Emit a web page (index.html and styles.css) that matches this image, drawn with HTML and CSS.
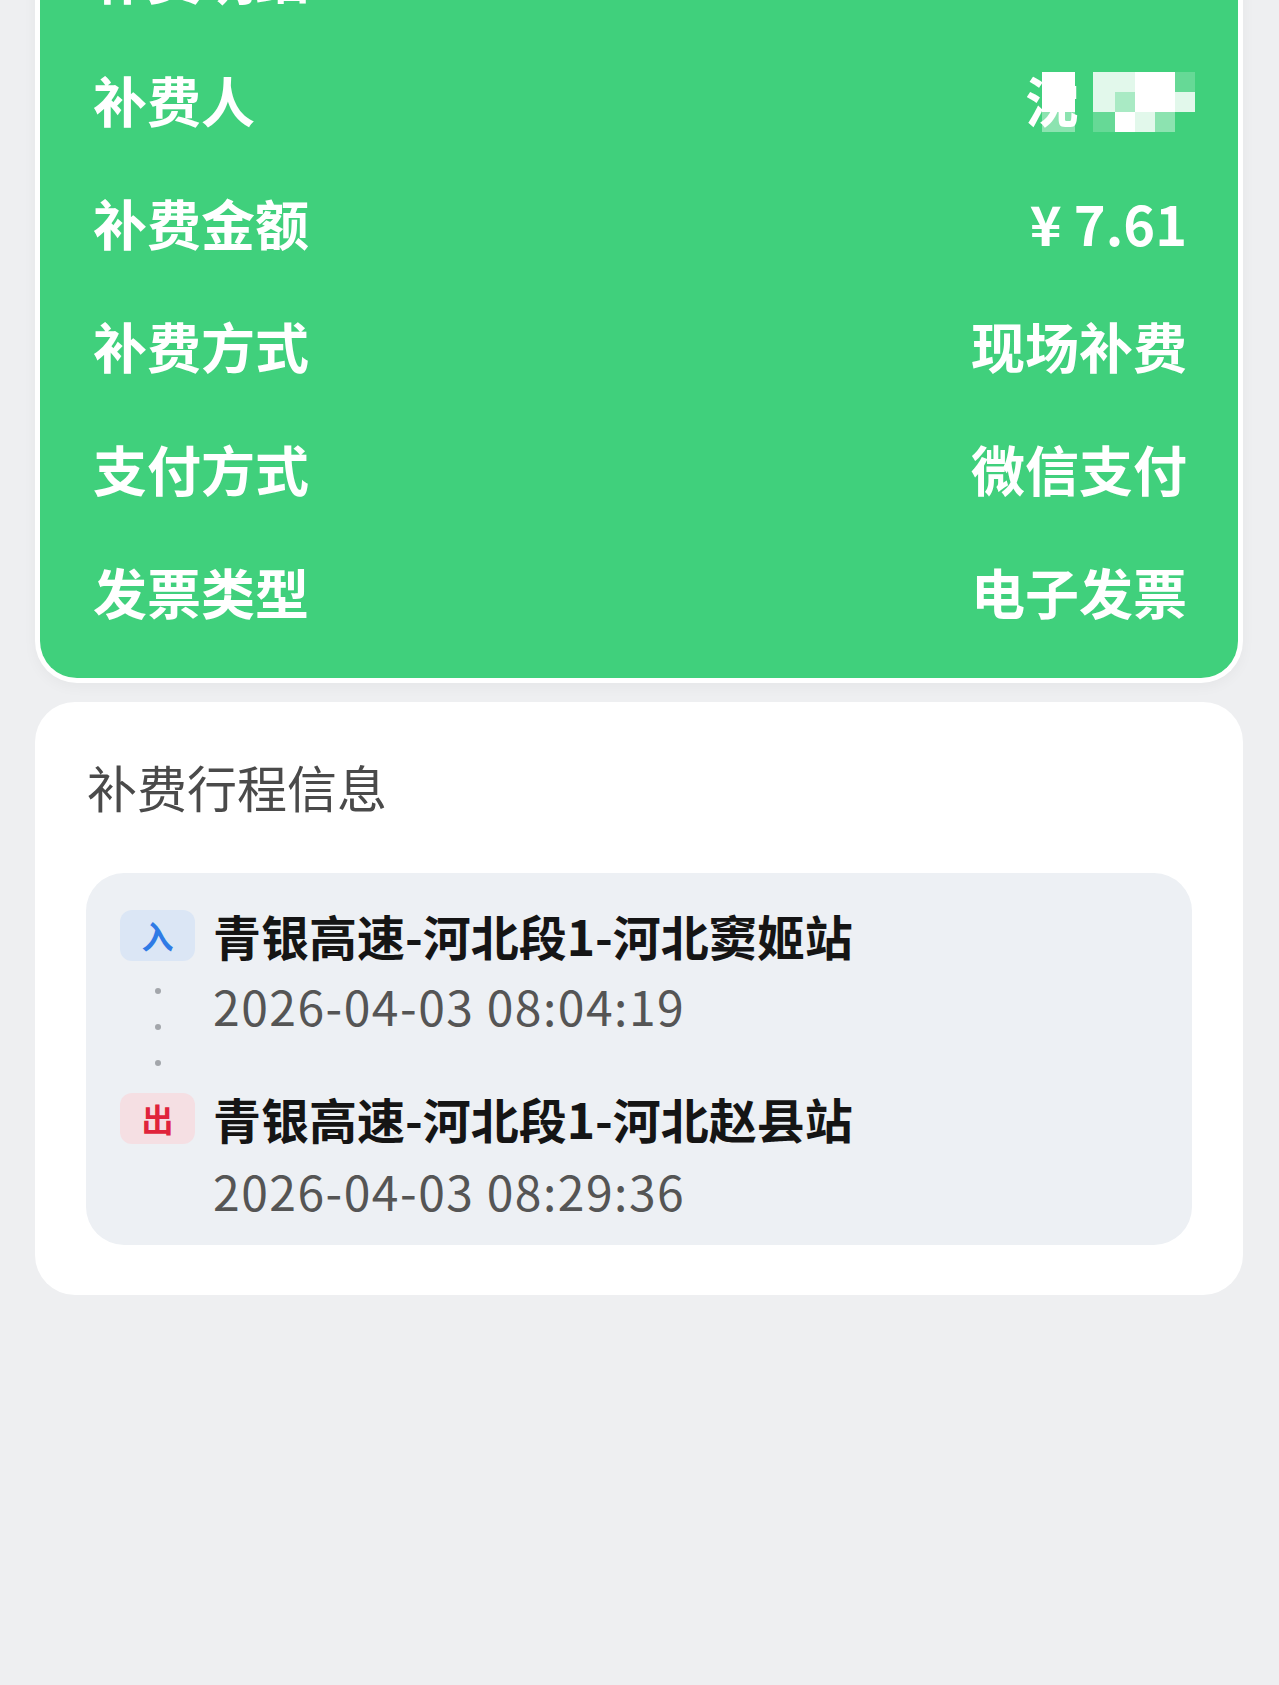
FILE: index.html
```html
<!DOCTYPE html>
<html lang="zh-CN">
<head>
    <meta charset="UTF-8">
    <meta name="viewport" content="width=device-width, initial-scale=1.0">
    <title>补费详情</title>
    <link rel="stylesheet" href="styles.css">
</head>
<body>

    <main class="page">

        <!-- 补费信息卡片 -->
        <section class="fee-card">
            <div class="fee-row fee-title">补费明细</div>
            <div class="fee-row">
                <span class="fee-label">补费人</span>
                <span class="fee-value payer">
                    <span>沈</span>
                    <span class="mosaic">
                        <i class="w"></i><i></i><i class="p"></i><i class="p"></i><i class="w"></i><i class="w"></i><i class="f"></i>
                        <i class="w"></i><i></i><i class="p"></i><i class="m"></i><i class="w"></i><i class="w"></i><i class="p"></i>
                        <i class="h"></i><i></i><i class="f"></i><i class="w"></i><i class="p"></i><i class="h"></i><i></i>
                    </span>
                </span>
            </div>
            <div class="fee-row">
                <span class="fee-label">补费金额</span>
                <span class="fee-value">¥ 7.61</span>
            </div>
            <div class="fee-row">
                <span class="fee-label">补费方式</span>
                <span class="fee-value">现场补费</span>
            </div>
            <div class="fee-row">
                <span class="fee-label">支付方式</span>
                <span class="fee-value">微信支付</span>
            </div>
            <div class="fee-row">
                <span class="fee-label">发票类型</span>
                <span class="fee-value">电子发票</span>
            </div>
        </section>

        <!-- 补费行程信息 -->
        <section class="trip-card">
            <h2>补费行程信息</h2>
            <div class="trip-box">
                <span class="badge badge-in">入</span>
                <span class="station">青银高速-河北段1-河北窦姬站</span>
                <span class="time time-in">2026-04-03 08:04:19</span>
                <span class="dots"><i></i><i></i><i></i></span>
                <span class="badge badge-out">出</span>
                <span class="station station-out">青银高速-河北段1-河北赵县站</span>
                <span class="time time-out">2026-04-03 08:29:36</span>
            </div>
        </section>

    </main>

</body>
</html>
```

FILE: styles.css
```css
* {
    margin: 0;
    padding: 0;
    box-sizing: border-box;
}

body {
    font-family: "Noto Sans CJK SC", "Noto Sans", sans-serif;
    background-color: #eeeff1;
    color: #333;
}

.page {
    padding: 0 36px 0 35px;
}

/* Green fee card */
.fee-card {
    margin-top: -85px;
    background-color: #40d07c;
    border: 5px solid #fff;
    border-top: 0;
    border-radius: 0 0 42px 42px;
    padding: 0 51px 25px 53px;
    box-shadow: 0 4px 14px rgba(0, 0, 0, 0.04);
    color: #fff;
}

.fee-row {
    height: 123px;
    display: flex;
    align-items: center;
    justify-content: space-between;
    font-size: 54px;
    font-weight: 700;
    line-height: 1;
}

.fee-value {
    display: flex;
    align-items: center;
}

.payer {
    margin-right: -8px;
}

.mosaic {
    display: grid;
    grid-template-columns: 33px 18px 22px 20px 20px 20px 20px;
    grid-template-rows: 20px 20px 20px;
    margin-left: -37px;
    margin-top: 4px;
}

.mosaic i.w { background-color: #fff; }
.mosaic i.p { background-color: rgba(255, 255, 255, 0.85); }
.mosaic i.m { background-color: rgba(255, 255, 255, 0.55); }
.mosaic i.h { background-color: rgba(255, 255, 255, 0.4); }
.mosaic i.f { background-color: rgba(255, 255, 255, 0.2); }

/* Trip card */
.trip-card {
    margin-top: 19px;
    background-color: #fff;
    border-radius: 40px;
    padding: 49px 51px 50px 51px;
}

.trip-card h2 {
    font-size: 50px;
    font-weight: 400;
    line-height: 70px;
    color: #4a4a4a;
    padding-left: 1px;
    margin-bottom: 52px;
}

.trip-box {
    background-color: #edf0f4;
    border-radius: 38px;
    padding: 32px 20px 13px 34px;
    display: grid;
    grid-template-columns: 75px 1fr;
    grid-template-rows: 60px 80px 43px 60px 84px;
    column-gap: 18px;
    align-items: center;
}

.badge {
    width: 75px;
    height: 51px;
    border-radius: 12px;
    display: flex;
    align-items: center;
    justify-content: center;
    font-size: 32px;
    font-weight: 700;
}

.badge-in {
    grid-row: 1;
    grid-column: 1;
    background-color: #dbe6f5;
    color: #2f7be6;
}

.badge-out {
    grid-row: 4;
    grid-column: 1;
    background-color: #f5dfe3;
    color: #e0233b;
}

.station {
    grid-row: 1;
    grid-column: 2;
    font-size: 48px;
    font-weight: 700;
    color: #151515;
    line-height: 1;
}

.station-out {
    grid-row: 4;
}

.time {
    grid-column: 2;
    font-size: 48px;
    letter-spacing: 1.5px;
    color: #555;
    line-height: 1;
}

.time-in { grid-row: 2; }
.time-out { grid-row: 5; }

.dots {
    grid-row: 2 / 4;
    grid-column: 1;
    align-self: stretch;
    display: flex;
    flex-direction: column;
    align-items: center;
    justify-content: center;
    gap: 30px;
}

.dots i {
    width: 6px;
    height: 6px;
    border-radius: 50%;
    background-color: #a3a6ab;
}
```
